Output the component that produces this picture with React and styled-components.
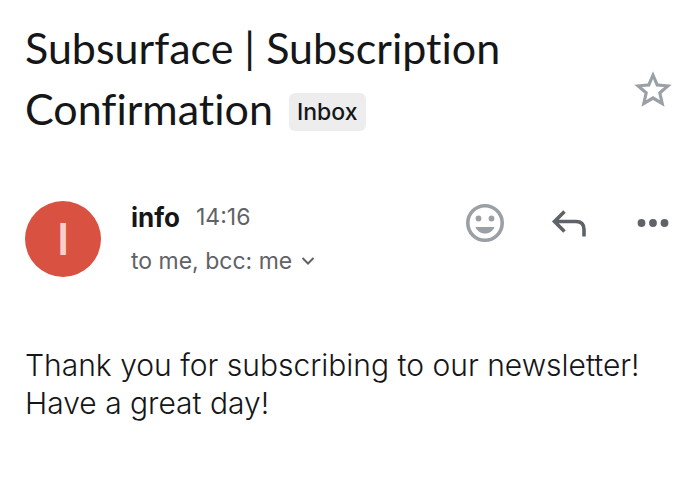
import React from 'react';
import styled, { createGlobalStyle } from 'styled-components';

const GlobalStyle = createGlobalStyle`
  * { box-sizing: border-box; }
  body { margin: 0; background: #fff; color: #151618; font-family: Inter, "Liberation Sans", sans-serif; }
`;

const Page = styled.main`
  padding: 17px 25px 24px;
`;

const SubjectRow = styled.header`
  display: flex;
  align-items: center;
  justify-content: space-between;
  gap: 24px;
`;

const SubjectBlock = styled.div`
  max-width: 540px;
  font-family: Lato, sans-serif;
  font-size: 43px;
  line-height: 61px;
`;

const Subject = styled.h1`
  display: inline;
  margin: 0;
  font: inherit;
  font-variant-ligatures: none;
`;

const Label = styled.span`
  display: inline-block;
  margin-left: 16px;
  padding: 0 8px;
  border-radius: 6px;
  background: #ededed;
  font-family: Inter, sans-serif;
  font-size: 23px;
  font-weight: 500;
  line-height: 38px;
  vertical-align: 5px;
`;

const IconButton = styled.button`
  display: grid;
  place-items: center;
  width: 40px;
  height: 40px;
  flex: none;
  padding: 0;
  border: 0;
  background: none;
  color: ${({ $dark }) => ($dark ? '#5f6368' : '#9aa0a6')};
`;

const StarButton = styled(IconButton)`
  width: 44px;
  height: 44px;
  margin: 24px -2px 0 0;
`;

const Sender = styled.section`
  display: flex;
  align-items: flex-start;
  margin-top: 56px;
`;

const Avatar = styled.div`
  display: grid;
  place-items: center;
  width: 76px;
  height: 76px;
  margin-top: 6px;
  border-radius: 50%;
  background: #d95140;
  color: #f6cfcb;
  font-family: Roboto, sans-serif;
  font-size: 45px;
  font-weight: 500;
`;

const Details = styled.div`
  flex: 1;
  margin-left: 30px;
`;

const Line = styled.div`
  display: flex;
  align-items: center;
  gap: 16px;
  height: 44px;
  font-size: 23px;
  color: #5f6368;
`;

const Name = styled.strong`
  font-size: 26px;
  font-weight: 700;
  color: #151618;
`;

const Recipients = styled.button`
  display: flex;
  align-items: center;
  gap: 9px;
  height: 44px;
  padding: 0;
  border: 0;
  background: none;
  font: inherit;
  font-size: 23px;
  color: #5f6368;
`;

const Actions = styled.div`
  display: flex;
  gap: 44px;
  margin-top: 8px;
`;

const Body = styled.p`
  margin: 63px 0 0;
  font-size: 30px;
  font-weight: 300;
  line-height: 38px;
`;

export default function App() {
  return (
    <Page>
      <GlobalStyle />
      <SubjectRow>
        <SubjectBlock>
          <Subject>Subsurface | Subscription Confirmation</Subject>
          <Label>Inbox</Label>
        </SubjectBlock>
        <StarButton aria-label="Star">
          <svg width="44" height="44" viewBox="0 0 24 24" fill="currentColor">
            <path d="M22.200 9.100l-7.300-.62L12 1.800 9.100 8.480 1.800 9.100l5.560 4.830L5.700 21.200 12 17.400l6.300 3.800-1.660-7.270L22.200 9.100zM12 15.300l-3.760 2.270 1-4.280-3.320-2.880 4.380-.38L12 6l1.710 4.030 4.380.38-3.320 2.880 1 4.280L12 15.300z" />
          </svg>
        </StarButton>
      </SubjectRow>
      <Sender>
        <Avatar>I</Avatar>
        <Details>
          <Line><Name>info</Name><time>14:16</time></Line>
          <Recipients>
            to me, bcc: me
            <svg width="14" height="10" viewBox="0 0 14 10" fill="none" stroke="currentColor" strokeWidth="2"><path d="M1.500 2l5.500 5.500L12.500 2" /></svg>
          </Recipients>
        </Details>
        <Actions>
          <IconButton aria-label="Add reaction">
            <svg width="40" height="40" viewBox="0 0 40 40" fill="currentColor">
              <circle cx="20" cy="20" r="17.2" fill="none" stroke="currentColor" strokeWidth="3.6" />
              <circle cx="13.5" cy="15.5" r="2.9" /><circle cx="26.500" cy="15.5" r="2.9" />
              <path d="M10.500 24h19c-1.500 4-5 6.500-9.500 6.500s-8-2.500-9.500-6.500z" />
            </svg>
          </IconButton>
          <IconButton aria-label="Reply" $dark>
            <svg width="40" height="40" viewBox="0 0 40 40" fill="none" stroke="currentColor" strokeWidth="3.6"><path d="M15.500 8.500L5.500 18.500l10 10M5.500 18.500H27c5.500 0 8 3 8 8V33.500" /></svg>
          </IconButton>
          <IconButton aria-label="More options" $dark>
            <svg width="40" height="40" viewBox="0 0 40 40" fill="currentColor"><circle cx="8.500" cy="20" r="3.900" /><circle cx="20" cy="20" r="3.900" /><circle cx="31.500" cy="20" r="3.900" /></svg>
          </IconButton>
        </Actions>
      </Sender>
      <Body>Thank you for subscribing to our newsletter! Have a great day!</Body>
    </Page>
  );
}
